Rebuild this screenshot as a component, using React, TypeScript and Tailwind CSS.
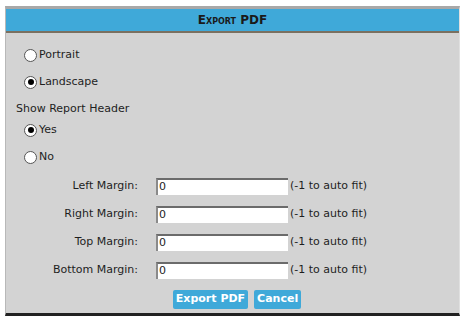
import React from 'react'

const font = { fontFamily: '"DejaVu Sans", Verdana, sans-serif' }

function Radio({ checked, label }: { checked?: boolean; label: string }) {
  return (
    <label className="flex h-[14px] items-center gap-[2px] pl-[18px]">
      <span className="flex h-[13px] w-[13px] items-center justify-center rounded-full border border-[#555] bg-white">
        {checked && <span className="h-[6px] w-[6px] rounded-full bg-black" />}
      </span>
      <span>{label}</span>
    </label>
  )
}

function MarginRow({ label }: { label: string }) {
  return (
    <div className="flex h-[18px] items-center">
      <div className="w-[132px] text-right">{label}</div>
      <div className="ml-[18px] h-[17px] w-[132px] border-t-2 border-l-2 border-t-[#6b6b6b] border-l-[#8a8a8a] bg-white pl-[1px] text-[11px] leading-[14px]">
        0
      </div>
      <div className="ml-[2px]">(-1 to auto fit)</div>
    </div>
  )
}

export default function App() {
  return (
    <div className="h-[326px] w-[469px] bg-white pt-[6px] pl-[5px]" style={font}>
      <div className="flex h-[310px] w-[455px] flex-col border-t-[3px] border-l border-r border-t-[#a8a8a8] border-l-[#b8b8b8] border-r-[#e0e0e0] border-b-[3px] border-b-[#222] bg-[#d3d3d3] text-[11px] text-[#1e1e1e]">
        <div className="flex h-[24px] items-center justify-center border-b-2 border-b-[#7a7060] bg-[#3fa9d9] text-[12px] font-bold text-[#1a1a1a] [font-variant:small-caps]">
          Export PDF
        </div>
        <div className="flex flex-col pt-[15px]">
          <Radio label="Portrait" />
          <div className="h-[13px]" />
          <Radio checked label="Landscape" />
          <div className="mt-[13px] h-[14px] pl-[10px] leading-[14px]">Show Report Header</div>
          <div className="h-[7px]" />
          <Radio checked label="Yes" />
          <div className="h-[13px]" />
          <Radio label="No" />
          <div className="mt-[13px] flex flex-col gap-[10px]">
            <MarginRow label="Left Margin:" />
            <MarginRow label="Right Margin:" />
            <MarginRow label="Top Margin:" />
            <MarginRow label="Bottom Margin:" />
          </div>
          <div className="mt-[11px] ml-[9px] flex justify-center gap-[6px]">
            <button className="h-[19px] rounded-[2px] bg-[#3fa9d9] px-[3px] text-[11px] font-bold text-white">Export PDF</button>
            <button className="h-[19px] rounded-[2px] bg-[#3fa9d9] px-[3px] text-[11px] font-bold text-white">Cancel</button>
          </div>
        </div>
      </div>
    </div>
  )
}
